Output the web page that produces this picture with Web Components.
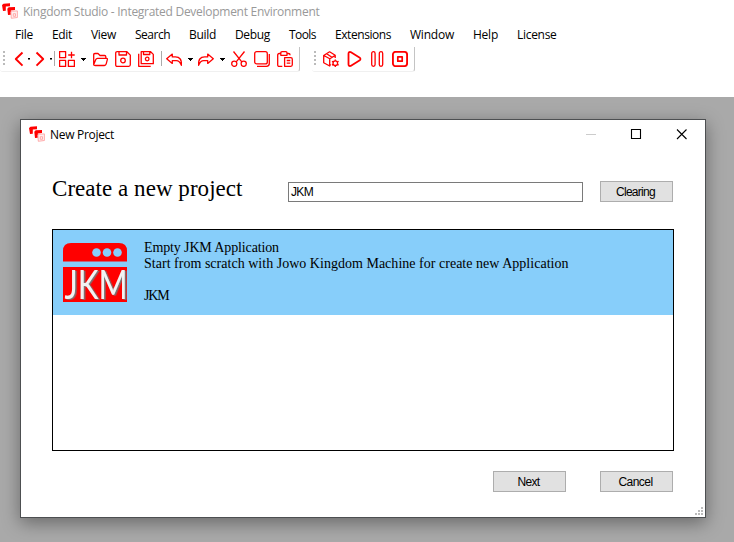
<!DOCTYPE html>
<html lang="en">
<head>
<meta charset="utf-8">
<title>Kingdom Studio</title>
<style>html,body{margin:0;width:734px;height:542px;overflow:hidden;background:#fff}</style>
</head>
<body>
<studio-window></studio-window>
<script>
const UI = '"Open Sans","Noto Sans",sans-serif';
function define(name, html, setup) {
  customElements.define(name, class extends HTMLElement {
    connectedCallback() {
      if (this.shadowRoot) return;
      const root = this.attachShadow({mode: 'open'});
      const t = document.createElement('template');
      t.innerHTML = typeof html === 'function' ? html(this) : html;
      root.append(t.content.cloneNode(true));
      if (setup) setup(this, root);
    }
  });
}

// A single line of text tracked to a given advance width.
define('text-line', el => `<style>:host{display:block;white-space:pre;flex:none;width:${el.getAttribute('w')}px}span{display:inline-block}</style><span>${el.getAttribute('text')}</span>`,
  (el, root) => {
    const s = root.querySelector('span'), n = el.getAttribute('text').length;
    s.style.letterSpacing = ((+el.getAttribute('w') - s.getBoundingClientRect().width) / n) + 'px';
  });

const icons = {
  back: '<path d="M11.500 1.500 4.800 8l6.700 6.700" stroke-width="1.900"/>',
  forward: '<path d="M4.500 1.500 11.200 8l-6.700 6.700" stroke-width="1.900"/>',
  grid: '<path d="M.6.6h6v6h-6zM.6 9.400h6v6h-6zM9.400 9.400h6v6h-6zM12.500.8v6.400M9.200 4h6.500"/>',
  folder: '<path d="M1.700 13.500V3.800q0-1.300 1.300-1.300h3l2 2h4.600q1.200 0 1.200 1.300v1.500M1.700 13.500l2.100-5q.5-1.200 1.800-1.200h9q1 0 .8 1l-1.200 4.600q-.4 1.600-1.800 1.600H3.200q-1.500 0-1.500-1z"/>',
  save: '<path d="M.7 2.200Q.7.7 2.200.7h9.700l3.400 3.400v9.700q0 1.500-1.500 1.500H2.200q-1.500 0-1.500-1.500zM4 .8V4h7.500V.8"/><circle cx="8" cy="9.500" r="2.300"/>',
  saveall: '<path d="M3.200.7h9.400l2.700 2.700v9.300H3.200zM5.500.8v2.700h6.300V.8M.7 2.800v12.500h12"/><circle cx="9.200" cy="8" r="1.800"/>',
  undo: '<path d="M6.300 3.100.7 7.700l5.600 4.700V9.600h4q3.300 0 5.100 4.700.6-8.400-6-8.400H6.300z"/>',
  redo: '<path d="m9.700 3.100 5.600 4.600-5.600 4.700V9.600h-4Q2.400 9.600.6 14.300 0 5.900 6.600 5.900h3.100z"/>',
  cut: '<path d="M2.500.5 11 11.200M13.500.5 5 11.200"/><circle cx="3.300" cy="12.800" r="2.600"/><circle cx="12.700" cy="12.800" r="2.600"/>',
  copy: '<rect x=".7" y=".7" width="12.600" height="12.200" rx="2"/><path d="M15.300 3v9.500q0 2.800-2.800 2.800H3"/>',
  paste: '<path d="M5.300 15.300H2.200Q.7 15.300.7 13.800V4Q.7 2.500 2.200 2.500h1.600M10 2.500h1.400q1.700 0 1.700 1.700M3.800 1.800Q3.800.7 5 .7h3.800Q10 .7 10 1.800v2.500H3.800zM7.600 6.700h6.200q1.500 0 1.500 1.500v5.600q0 1.500-1.500 1.500H7.600zM9.700 9.500h3.600M9.700 12.200h3.600"/>',
  cube: '<path d="M7.500 13.200 6.700 15 .7 11.800V4.500L6.600.8l5.600 3.500v2.700M.8 4.500l6 3.300 5.400-3.400M6.700 7.800V15M3.700 2.700l5.200 3.500"/><circle cx="12.300" cy="12.200" r="2.300"/><path d="M12.300 8.400v1.300M12.300 14.700v1.300M9 10.300l1.200.7M14.400 13.400l1.200.7M9 14.100l1.200-.7M14.400 11l1.200-.7"/>',
  play: '<path d="M2.500 2.800Q2.500.6 4.600 1.100l8.800 5.300q2.100 1.600 0 3.200L4.600 14.900Q2.500 15.400 2.500 13.200z" stroke-width="1.800"/>',
  pause: '<rect x="2.700" y=".7" width="3.400" height="14.600" rx="1.700"/><rect x="10.300" y=".7" width="3.400" height="14.600" rx="1.700"/>',
  stop: '<rect x=".9" y=".9" width="14.200" height="14.200" rx="2.700" stroke-width="1.900"/><rect x="5.800" y="5.800" width="4.400" height="4.400" stroke-width="1.700"/>'
};
define('tool-icon', el => `<style>:host{display:block;width:16px;height:16px;flex:none}svg{display:block;fill:none;stroke:#f00;stroke-width:1.300;stroke-linejoin:round}</style><svg width="16" height="16">${icons[el.getAttribute('name')]}</svg>`);
define('drop-mark', `<style>:host{display:block;width:6px;height:16px;flex:none}svg{display:block}</style><svg width="6" height="16" shape-rendering="crispEdges"><path d="M.5 7h5v1h-1v1h-1v1h-1V9h-1V8h-1z"/></svg>`);
define('mini-mark', `<style>:host{display:flex;width:3px;height:16px;flex:none}i{width:2px;height:1px;background:#000;margin:7px 0 0 1px;box-shadow:0 1px #777}</style><i></i>`);
define('tool-sep', `<style>:host{display:block;width:1px;height:15px;background:#aaa;flex:none}</style>`);
define('tool-grip', `<style>:host{display:grid;width:2px;gap:2px;height:14px;flex:none}i{width:2px;height:2px;background:#bbb}</style><i></i><i></i><i></i><i></i>`);
define('app-mark', `<style>:host{display:block;width:16px;height:16px;flex:none}svg{display:block}</style>
<svg width="16" height="16"><path d="M0 2 1.500.7 8 .3V3.300L3.800 3.600V7.800L1 8z" fill="#f00"/><path d="M5.300 5.700 6.700 4.300 13 4V7L8.800 7.500V11.700L6 12z" fill="#f00"/><path d="M8.900 9 10.300 8.200l5.100-.3v6.600l-6.100.8zM11.300 10.700h2.200v2.600h-2.200z" fill="#fff0f0" stroke="#f99" stroke-width=".8"/></svg>`);

define('tool-strip', `<style>:host{display:block;box-sizing:border-box;height:25px;flex:none;border-bottom:1px solid #f0f0f0;border-radius:3px 0 3px 3px;border-right:1px solid #c4c4c4}div{display:flex;padding-top:4px}</style><div><slot></slot></div>`);

define('menu-bar', `<style>:host{display:flex;gap:19px;padding:3px 0 0 15px;height:20px;font:12px/16px ${UI};color:#000}</style>` +
  [['File',18],['Edit',20],['View',25],['Search',35],['Build',27],['Debug',35],['Tools',27],['Extensions',56],['Window',44],['Help',25],['License',39.5]]
  .map(([t,w]) => `<text-line text="${t}" w="${w}"></text-line>`).join(''));

define('push-button', el => `<style>:host{display:flex;box-sizing:border-box;width:73px;height:21px;justify-content:center;border:1px solid #adadad;background:#e1e1e1;font:12px/20px "Liberation Sans",sans-serif;color:#000;padding-right:2px}</style><text-line text="${el.getAttribute('label')}" w="${el.getAttribute('w')}"></text-line>`);

define('project-icon', `<style>:host{display:block;width:64px;height:59px;flex:none}svg{display:block;overflow:visible}text{font:41px/1 Lato,"Open Sans",sans-serif}</style>
<svg width="64" height="59"><path d="M0 18.500V8Q0 0 8 0h48q8 0 8 8v10.500z" fill="#f00"/><g fill="#87cefa"><circle cx="33.500" cy="9.500" r="4.300"/><circle cx="44" cy="9.500" r="4.300"/><circle cx="54.500" cy="9.500" r="4.300"/></g><path d="M0 24h64v35H0z" fill="#f00"/>
<defs><filter id="s" x="-10%" y="-10%" width="120%" height="120%"><feDropShadow dx="1.600" dy=".8" stdDeviation=".25" flood-color="#777"/></filter></defs>
<text x="1.500" y="56" textLength="63" lengthAdjust="spacingAndGlyphs" fill="#f2f2f2" filter="url(#s)">JKM</text></svg>`);

define('project-item', `<style>:host{display:flex;height:75px;background:#87cefa;padding:10px 0 0 10px;gap:17px}
project-icon{margin-top:3px}div{font:14px/16px "Liberation Serif",serif;color:#000}text-line{height:16px}</style>
<project-icon></project-icon><div><text-line text="Empty JKM Application" w="135"></text-line><text-line text="Start from scratch with Jowo Kingdom Machine for create new Application" w="424.500"></text-line><text-line text=" " w="4"></text-line><text-line text="JKM" w="24.500"></text-line></div>`);

define('caption-buttons', `<style>:host{display:block;margin-left:auto}svg{display:block}</style><svg width="119" height="30"><path d="M0 14.500h10" stroke="#ccc"/><path d="M45.500 9.500h9v9h-9z" fill="none" stroke="#000" stroke-width="1.100"/><path d="m91 9.500 9.500 9.500M100.500 9.500 91 19" stroke="#000" stroke-width="1.100"/></svg>`);

define('new-project-dialog', `<style>:host{display:flex;flex-direction:column;box-sizing:border-box;width:686px;height:399px;border:1px solid #4d4f51;background:#fff;box-shadow:0 5px 17px rgba(0,0,0,.38)}
.title{display:flex;height:30px;flex:none}.title app-mark{margin:6px 0 0 8px}.title text-line{margin:7px 0 0 5px;font:12px/16px ${UI}}
.search{display:flex;padding:31px 32px 0 31px;height:48px;flex:none;align-items:flex-start}
h1{margin:-5px 0 0;font:23px/26px "Liberation Serif",serif;width:236px;color:#000}
.input{box-sizing:border-box;width:295px;height:20px;margin-top:1px;border:1px solid #7a7a7a;padding-left:2px;font:12px/18px "Liberation Sans",sans-serif}
.search push-button{margin-left:17px}
.list{box-sizing:border-box;height:222px;width:622px;margin-left:31px;border:1px solid #000;flex:none}
.foot{display:flex;justify-content:flex-end;gap:34px;padding:20px 32px 0 0}
.size{display:grid;grid-template-columns:repeat(3,2px);gap:1px;margin:auto 2px 2px auto}.size i{width:2px;height:2px;background:#bbb}.size i.o{background:none}
</style>
<div class="title"><app-mark></app-mark><text-line text="New Project" w="64"></text-line><caption-buttons></caption-buttons></div>
<div class="search"><h1><text-line text="Create a new project" w="190.500"></text-line></h1><div class="input"><text-line text="JKM" w="22"></text-line></div><push-button label="Clearing" w="39"></push-button></div>
<div class="list"><project-item></project-item></div>
<div class="foot"><push-button label="Next" w="22"></push-button><push-button label="Cancel" w="34"></push-button></div>
<div class="size"><i class="o"></i><i class="o"></i><i></i><i class="o"></i><i></i><i></i><i></i><i></i><i></i></div>`);

const ic = (n, m) => `<tool-icon name="${n}" style="margin-left:${m}px"></tool-icon>`;
const at = (tag, m) => `<${tag} style="margin-left:${m}px"></${tag}>`;
define('studio-window', `<style>:host{display:flex;flex-direction:column;width:734px;height:542px;background:#fff}
.title{display:flex;height:21px;padding-top:3px;padding-left:2px;gap:5px;color:#999;font:12px/16px ${UI}}
.title text-line{margin-top:1px}
.tools{display:flex;height:50px;gap:12px}
main{flex:1;display:flex;box-sizing:border-box;padding:22px 0 0 20px;background:#a9a9a9;overflow:hidden}
</style>
<div class="title"><app-mark></app-mark><text-line text="Kingdom Studio - Integrated Development Environment" w="296.500"></text-line></div>
<menu-bar></menu-bar>
<div class="tools"><tool-strip style="width:300px">${at('tool-grip',3)}${ic('back',6)}${at('mini-mark',0)}${ic('forward',2)}${at('mini-mark',1)}${at('tool-sep',2)}${ic('grid',4)}${at('drop-mark',5)}${ic('folder',6)}${ic('save',7)}${ic('saveall',7)}${at('tool-sep',7)}${ic('undo',4)}${at('drop-mark',5)}${ic('redo',5)}${at('drop-mark',5)}${ic('cut',6)}${ic('copy',7)}${ic('paste',7)}</tool-strip>
<tool-strip style="width:103px">${at('tool-grip',2)}${ic('cube',7)}${ic('play',7)}${ic('pause',7)}${ic('stop',7)}</tool-strip></div>
<main><new-project-dialog></new-project-dialog></main>`);
</script>
</body>
</html>
